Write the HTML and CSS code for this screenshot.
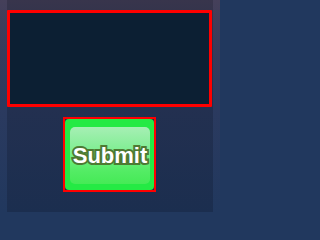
FILE: index.html
```html
<!DOCTYPE html>
<html>
<head>
<meta charset="utf-8">
<link rel="stylesheet" href="styles.css">
</head>
<body>
<div class="page">
  <div class="panel">
    <textarea class="input"></textarea>
    <div class="actions">
      <button class="submit"><span class="body"><span class="face">Submit</span></span></button>
    </div>
  </div>
</div>
</body>
</html>
```
FILE: styles.css
```css
html, body {
  margin: 0;
  padding: 0;
  background: #21385e;
}
body {
  font-family: "Liberation Sans", Arial, sans-serif;
  overflow: hidden;
}
.page {
  width: 220px;
  height: 212px;
  padding: 0 7px;
  box-sizing: border-box;
  background: linear-gradient(to bottom, #45405a 0%, #363c5c 25%, #2b3a5f 50%, #21385e 100%);
}
.panel {
  width: 206px;
  height: 212px;
  box-sizing: border-box;
  padding-top: 10px;
  background: rgba(4, 8, 20, 0.2);
  display: flex;
  flex-direction: column;
}
.input {
  display: block;
  box-sizing: border-box;
  width: 205px;
  height: 97px;
  margin: 0;
  padding: 0;
  border: 3px solid #ff0000;
  border-radius: 1px;
  background: #0c1f33;
  resize: none;
  outline: none;
}
.actions {
  display: flex;
  justify-content: center;
  margin-top: 10px;
  padding-right: 1px;
}
.submit {
  box-sizing: border-box;
  width: 93px;
  height: 75px;
  margin: 0;
  padding: 0;
  border: 2px solid #ff0000;
  background: transparent;
  display: flex;
  cursor: pointer;
}
.body {
  flex: 1;
  display: flex;
  padding: 8px 4px 6px 5px;
  border-radius: 4px;
  background: #24ea44;
}
.face {
  flex: 1;
  display: flex;
  align-items: center;
  justify-content: center;
  border-radius: 5px;
  background: linear-gradient(to bottom, #a6efb4 0%, #86ee98 35%, #55ec66 75%, #45ea56 100%);
  font-family: "Liberation Sans", Arial, sans-serif;
  font-weight: bold;
  font-size: 22px;
  color: #ffffff;
  -webkit-text-stroke: 4px #4d7a33;
  paint-order: stroke fill;
  line-height: 1;
}
```
